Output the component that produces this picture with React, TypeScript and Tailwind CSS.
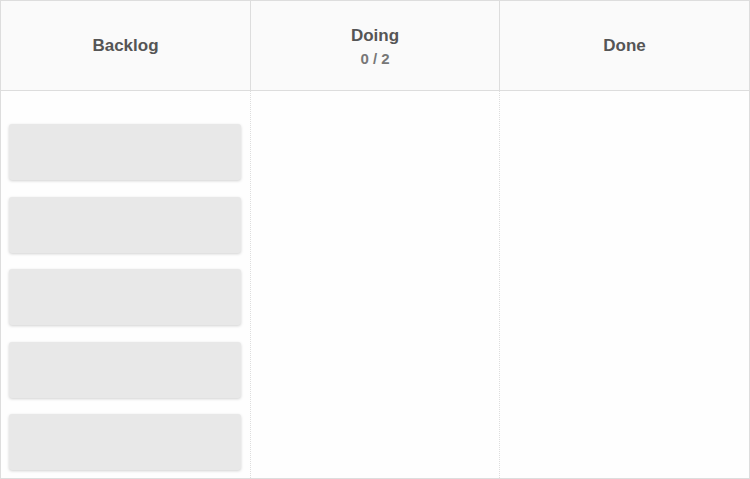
const columns = [
  { title: "Backlog", cards: 5 },
  { title: "Doing", limit: "0 / 2", cards: 0 },
  { title: "Done", cards: 0 },
];

export default function App() {
  return (
    <div
      className="flex h-[479px] w-[750px] flex-col border border-[#dddddd] bg-[#fefefe] text-[#555555]"
      style={{ fontFamily: '"Liberation Sans", Arial, sans-serif' }}
    >
      <div className="grid h-[90px] shrink-0 grid-cols-[249px_249px_1fr] border-b border-[#dddddd] bg-[#fafafa]">
        {columns.map((col, i) => (
          <div
            key={col.title}
            className={`flex flex-col items-center justify-center pt-[1px] ${i > 0 ? "border-l border-[#dddddd]" : ""}`}
          >
            <div className="text-[17px] font-bold leading-[20px]">{col.title}</div>
            {col.limit && (
              <div className="mt-[4px] text-[15px] font-bold leading-[17px] text-[#777777]">{col.limit}</div>
            )}
          </div>
        ))}
      </div>
      <div className="grid flex-1 grid-cols-[249px_249px_1fr]">
        {columns.map((col, i) => (
          <div
            key={col.title}
            className={`flex flex-col gap-[16.5px] pl-[8px] pr-[8px] pt-[33px] ${i > 0 ? "border-l border-dotted border-[#dddddd]" : ""}`}
          >
            {Array.from({ length: col.cards }).map((_, j) => (
              <div
                key={j}
                className="h-[56px] w-[232px] shrink-0 rounded-[3px] bg-[#e8e8e8] shadow-[0_1px_3px_rgba(0,0,0,0.18)]"
              />
            ))}
          </div>
        ))}
      </div>
    </div>
  );
}
